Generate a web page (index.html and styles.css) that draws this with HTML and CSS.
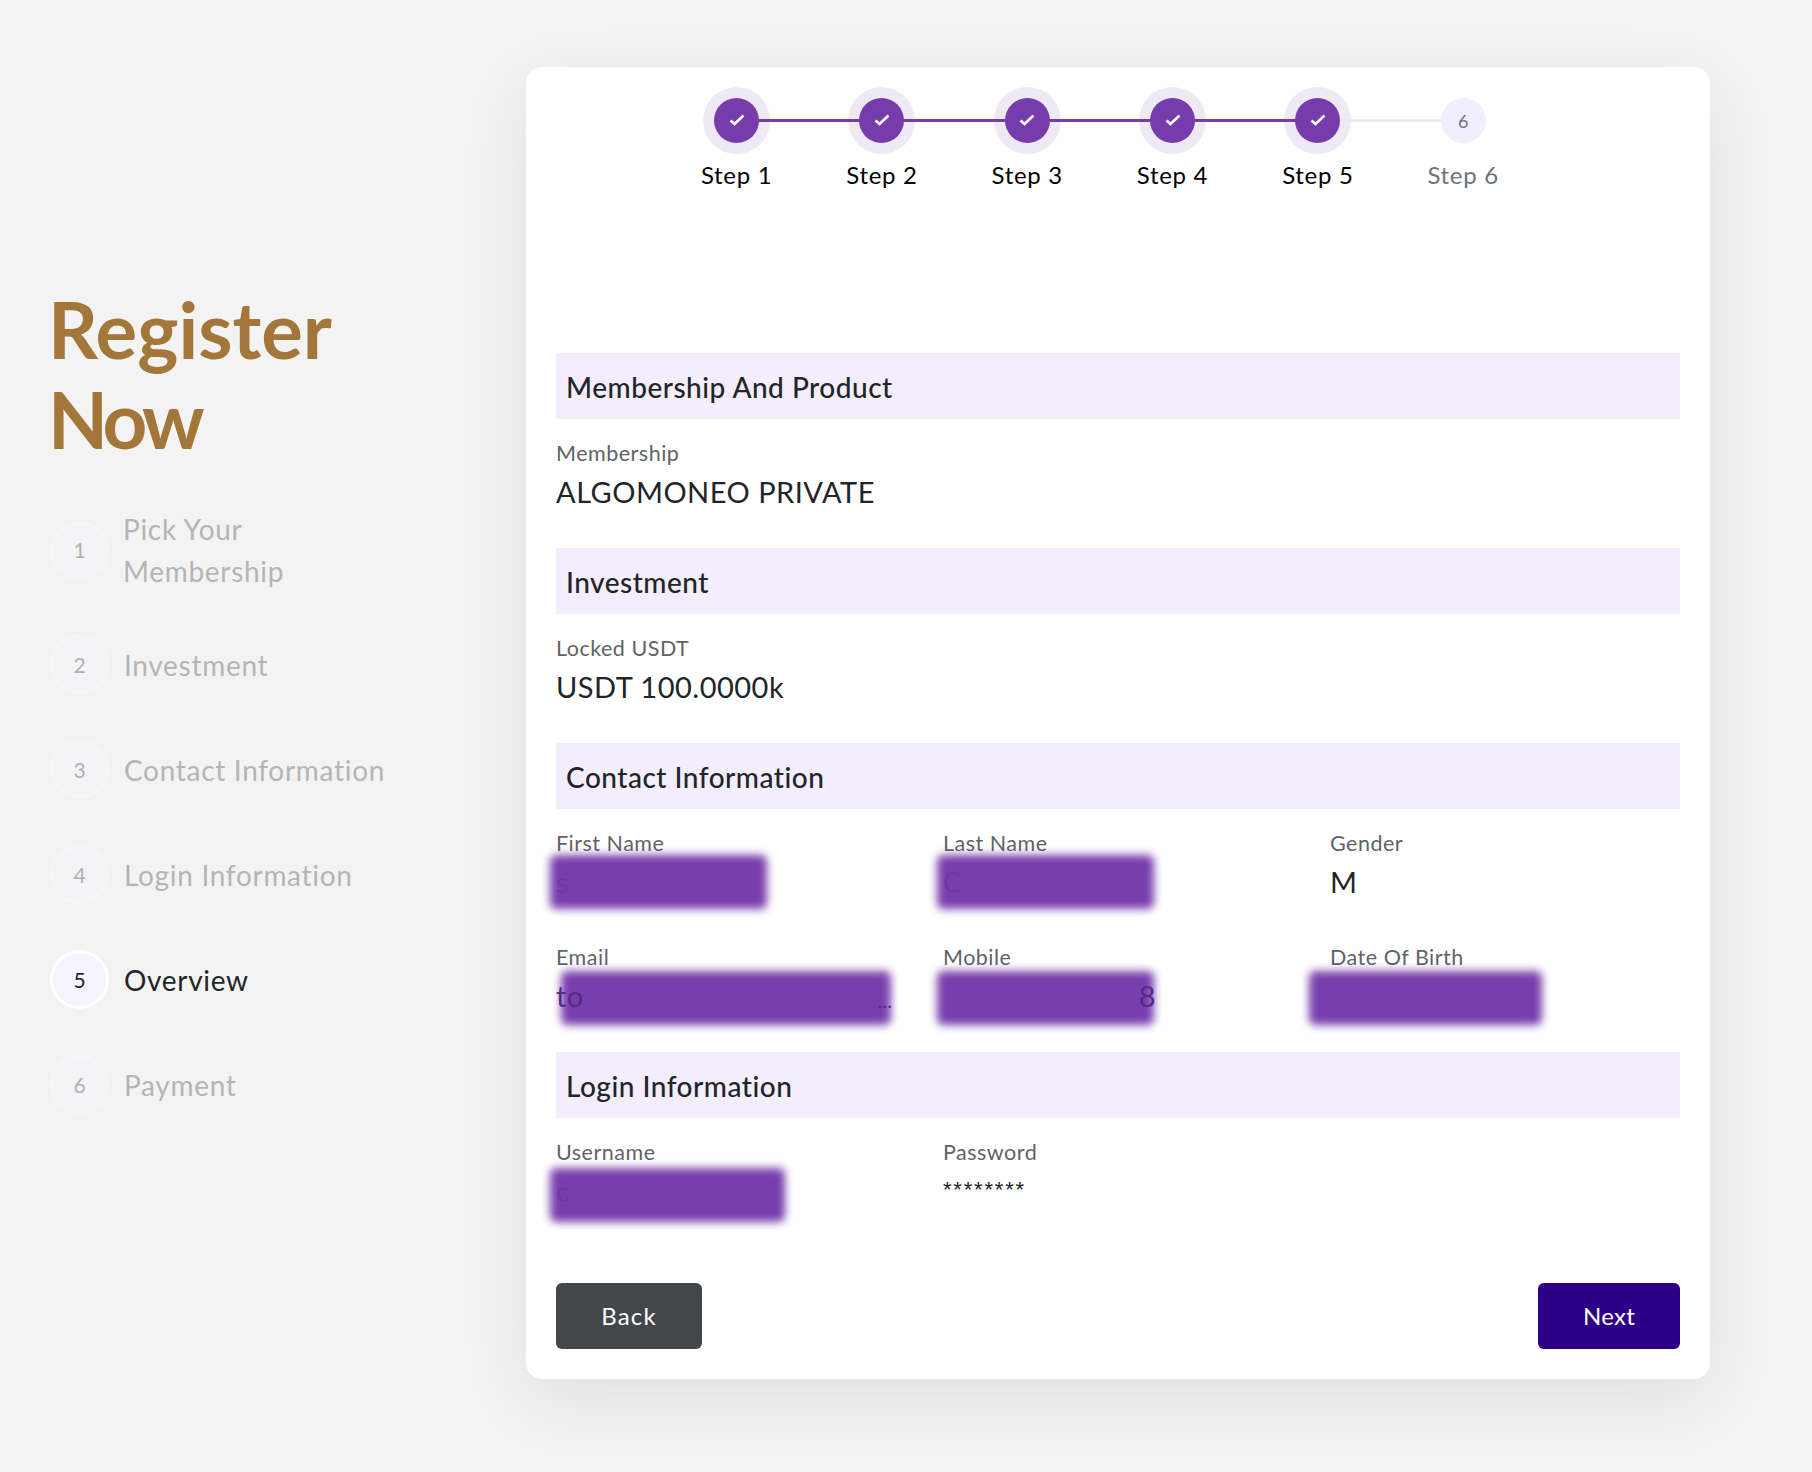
FILE: index.html
```html
<!DOCTYPE html>
<html lang="en">
<head>
<meta charset="utf-8">
<title>Register Now</title>
<link rel="stylesheet" href="styles.css">
</head>
<body>
<div class="page">
  <aside class="sidebar">
    <h1 class="headline">Register<br><span class="headline-tight">Now</span></h1>
    <ol class="side-steps">
      <li class="side-step side-step-tall"><span class="side-num">1</span><span class="side-label">Pick Your<br>Membership</span></li>
      <li class="side-step"><span class="side-num">2</span><span class="side-label">Investment</span></li>
      <li class="side-step"><span class="side-num">3</span><span class="side-label">Contact Information</span></li>
      <li class="side-step"><span class="side-num">4</span><span class="side-label">Login Information</span></li>
      <li class="side-step is-current"><span class="side-num">5</span><span class="side-label">Overview</span></li>
      <li class="side-step"><span class="side-num">6</span><span class="side-label">Payment</span></li>
    </ol>
  </aside>
  <main class="card">
    <div class="stepper">
      <div class="step is-done"><div class="halo"><span class="dot"><svg class="check" viewBox="0 0 16 12"><path d="M1.5 6.5 5.5 10 14.5 1.5"/></svg></span></div><div class="step-label">Step 1</div></div>
      <div class="step is-done"><div class="halo"><span class="dot"><svg class="check" viewBox="0 0 16 12"><path d="M1.5 6.5 5.5 10 14.5 1.5"/></svg></span></div><div class="step-label">Step 2</div></div>
      <div class="step is-done"><div class="halo"><span class="dot"><svg class="check" viewBox="0 0 16 12"><path d="M1.5 6.5 5.5 10 14.5 1.5"/></svg></span></div><div class="step-label">Step 3</div></div>
      <div class="step is-done"><div class="halo"><span class="dot"><svg class="check" viewBox="0 0 16 12"><path d="M1.5 6.5 5.5 10 14.5 1.5"/></svg></span></div><div class="step-label">Step 4</div></div>
      <div class="step is-done is-last-done"><div class="halo"><span class="dot"><svg class="check" viewBox="0 0 16 12"><path d="M1.5 6.5 5.5 10 14.5 1.5"/></svg></span></div><div class="step-label">Step 5</div></div>
      <div class="step is-todo"><div class="halo"><span class="dot">6</span></div><div class="step-label">Step 6</div></div>
    </div>

    <section class="block block-first">
      <h2 class="bar">Membership And Product</h2>
      <div class="fields">
        <div class="field"><div class="label">Membership</div><div class="value">ALGOMONEO PRIVATE</div></div>
      </div>
    </section>

    <section class="block">
      <h2 class="bar">Investment</h2>
      <div class="fields">
        <div class="field"><div class="label">Locked USDT</div><div class="value">USDT 100.0000k</div></div>
      </div>
    </section>

    <section class="block">
      <h2 class="bar">Contact Information</h2>
      <div class="fields">
        <div class="field"><div class="label">First Name</div><div class="value">s</div><span class="redact redact-first"></span></div>
        <div class="field"><div class="label">Last Name</div><div class="value">C</div><span class="redact redact-last"></span></div>
        <div class="field"><div class="label">Gender</div><div class="value">M</div></div>
        <div class="field"><div class="label">Email</div><div class="value value-split value-email"><span class="peek">to</span><span class="peek peek-dots">...</span></div><span class="redact redact-email"></span></div>
        <div class="field"><div class="label">Mobile</div><div class="value value-split value-mobile"><span></span><span class="peek">8</span></div><span class="redact redact-mobile"></span></div>
        <div class="field"><div class="label">Date Of Birth</div><div class="value"></div><span class="redact redact-dob"></span></div>
      </div>
    </section>

    <section class="block">
      <h2 class="bar">Login Information</h2>
      <div class="fields">
        <div class="field"><div class="label">Username</div><div class="value">c</div><span class="redact redact-user"></span></div>
        <div class="field"><div class="label">Password</div><div class="value value-secret">********</div></div>
      </div>
    </section>

    <div class="actions">
      <button class="btn btn-back" type="button">Back</button>
      <button class="btn btn-next" type="button">Next</button>
    </div>
  </main>
</div>
</body>
</html>
```
FILE: styles.css
```css
* { box-sizing: border-box; }
html, body { margin: 0; padding: 0; }
body {
  background: #f3f3f3;
  color: #212529;
  font-family: "Lato", "Noto Sans", sans-serif;
  height: 1472px;
  overflow: hidden;
}
.page { display: flex; align-items: flex-start; padding: 67px 102px 0 50px; }

.sidebar { width: 476px; flex: none; padding-top: 217px; }
.headline {
  margin: 0 0 0 -2px;
  font-size: 78px;
  line-height: 90px;
  font-weight: 700;
  color: #a3763a;
  letter-spacing: 0;
}
.headline-tight { letter-spacing: -4.5px; }
.side-steps { list-style: none; margin: 44px 0 0; padding: 0; display: flex; flex-direction: column; gap: 46px; }
.side-step { display: flex; align-items: center; gap: 15px; color: #b5b5b5; font-size: 28px; line-height: 41px; letter-spacing: .7px; }
.side-label { padding-top: 1px; }
.side-step-tall { gap: 14px; line-height: 41.5px; margin-bottom: -2px; }
.side-num {
  flex: none;
  width: 59px;
  height: 59px;
  border-radius: 50%;
  border: 3px solid #f6f6f8;
  background: #f4f4f6;
  color: #b0b0b0;
  font-size: 21px;
  letter-spacing: 0;
  display: flex;
  align-items: center;
  justify-content: center;
}
.is-current { color: #212529; }
.is-current .side-num { background: #f6f5ff; border-color: #fff; color: #212529; }

.card {
  width: 1184px;
  flex: none;
  background: #fff;
  border-radius: 16px;
  padding: 20px 30px 30px;
  box-shadow: 0 20px 70px rgba(0, 0, 0, .08);
}

.stepper { display: flex; padding-left: 108px; }
.step { position: relative; width: 145.3px; flex: none; display: flex; flex-direction: column; align-items: center; }
.step::after {
  content: "";
  position: absolute;
  top: 32px;
  left: 50%;
  width: 100%;
  height: 3px;
  background: #763cac;
  z-index: 1;
}
.is-last-done::after { background: #ebe9ec; }
.is-todo::after { display: none; }
.halo { width: 67px; height: 67px; border-radius: 50%; display: flex; align-items: center; justify-content: center; background: #efe9f6; }
.is-todo .halo { background: transparent; }
.dot {
  position: relative;
  z-index: 2;
  width: 45px;
  height: 45px;
  border-radius: 50%;
  background: #763cac;
  display: flex;
  align-items: center;
  justify-content: center;
}
.is-todo .dot { background: #f1eefd; color: #6c757d; font-size: 18px; }
.check { width: 16px; height: 12px; margin-bottom: 2px; fill: none; stroke: #fff; stroke-width: 2.6; }
.step-label { margin-top: 6px; font-size: 24px; line-height: 30px; color: #000; letter-spacing: .7px; white-space: nowrap; }
.is-todo .step-label { color: #6c757d; }

.block { margin-top: 36px; }
.block-first { margin-top: 163px; }
.bar {
  margin: 0;
  height: 66px;
  padding: 1px 0 0 10px;
  background: #f3edfc;
  display: flex;
  align-items: center;
  font-size: 28px;
  font-weight: 500;
  color: #212529;
  letter-spacing: .5px;
}
.fields { display: grid; grid-template-columns: repeat(3, 350px); column-gap: 37px; row-gap: 41px; padding: 19px 0 1px; }
.field { position: relative; }
.label { font-size: 21.5px; line-height: 30px; color: #5f6368; letter-spacing: .5px; }
.value { padding-top: 4px; font-size: 29px; line-height: 40px; height: 43px; color: #212529; letter-spacing: .5px; }
.value-split { display: flex; justify-content: space-between; }
.value-email { width: 336px; }
.value-mobile { width: 213px; }
.value-secret { font-family: "Liberation Sans", sans-serif; font-size: 22px; line-height: 38px; letter-spacing: 1.8px; }
.peek { position: relative; z-index: 1; color: #55288a; }
.peek-dots { font-size: 20px; letter-spacing: 0; line-height: 48px; }

.redact {
  position: absolute;
  background: #7438aa;
  opacity: .97;
  border-radius: 6px;
  filter: blur(4px);
}
.redact-first { left: -6px; top: 27px; width: 217px; height: 54px; }
.redact-last { left: -6px; top: 27px; width: 217px; height: 54px; }
.redact-email { left: 5px; top: 29px; width: 330px; height: 54px; }
.redact-mobile { left: -6px; top: 29px; width: 217px; height: 54px; }
.redact-dob { left: -21px; top: 29px; width: 233px; height: 54px; }
.redact-user { left: -6px; top: 31px; width: 235px; height: 54px; }

.actions { display: flex; justify-content: space-between; margin-top: 72px; }
.btn {
  height: 66px;
  padding: 0 0 2px;
  border: 0;
  border-radius: 6px;
  color: #fff;
  font-family: inherit;
  font-size: 24px;
  letter-spacing: .3px;
}
.btn-back { width: 146px; background: #43474b; letter-spacing: 1.2px; }
.btn-next { width: 142px; background: #2e0088; }
.side-steps .side-step-tall { margin-bottom: -3px; }
```
